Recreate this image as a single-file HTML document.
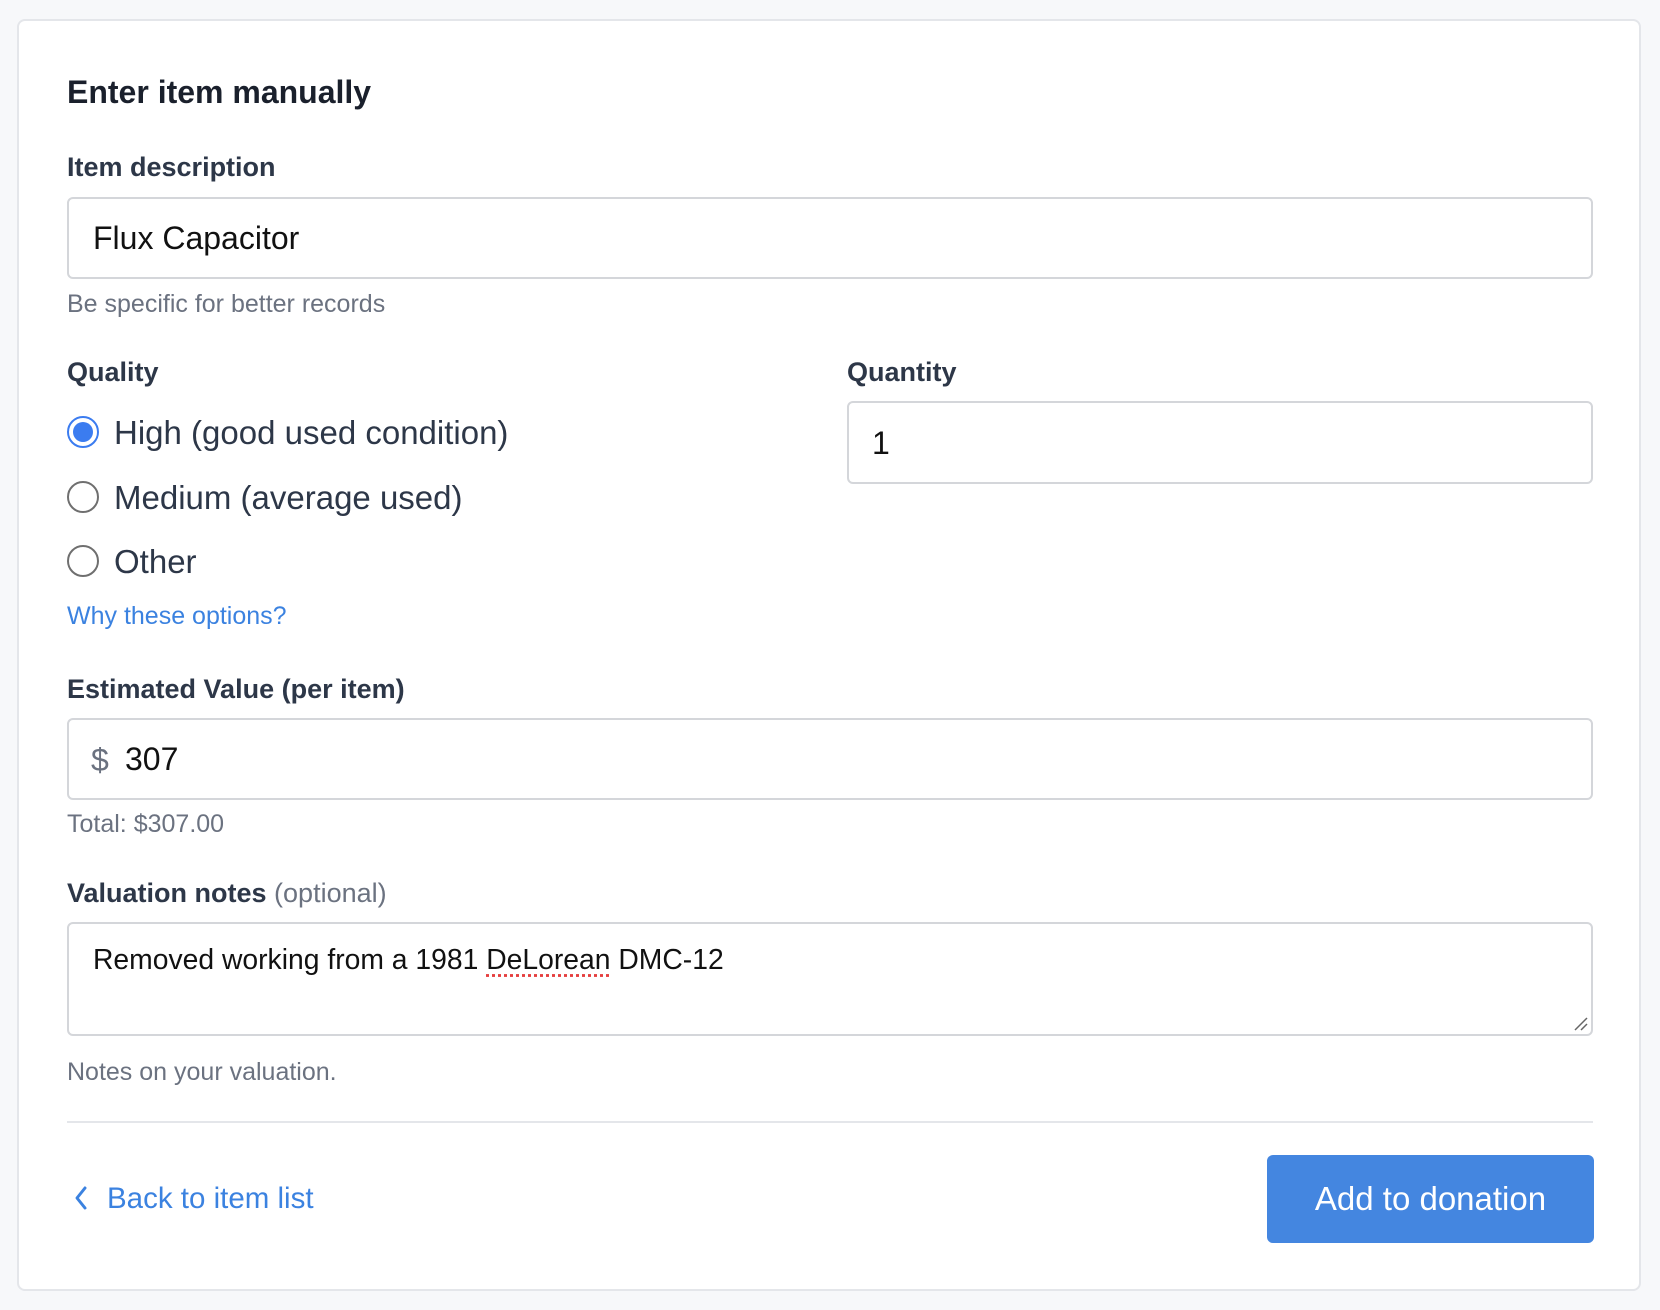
<!DOCTYPE html>
<html><head><meta charset="utf-8"><style>
body{margin:0;width:1660px;height:1310px;background:#f7f8fa;font-family:"Liberation Sans",sans-serif;position:relative;overflow:hidden}
.card{position:absolute;left:17px;top:19px;width:1624px;height:1272px;background:#fff;border:2px solid #e4e6ea;border-radius:8px;box-sizing:border-box}
.a{position:absolute;white-space:nowrap;line-height:1}
.lbl{font-size:27px;font-weight:bold;color:#2d3748}
.help{font-size:25px;color:#6b7280}
.inp{position:absolute;left:67px;width:1526px;border:2px solid #d4d6da;border-radius:6px;box-sizing:border-box;background:#fff}
.radio{position:absolute;left:67px;width:32px;height:32px;border-radius:50%;border:2px solid #6f6f6f;box-sizing:border-box}
.rt{font-size:33px;color:#2d3748}
</style></head><body>
<div class="card"></div>
<div class="a" style="left:67px;top:76px;font-size:32px;font-weight:bold;color:#1a202c">Enter item manually</div>
<div class="a lbl" style="left:67px;top:154px">Item description</div>
<div class="inp" style="top:197px;height:82px"></div>
<div class="a" style="left:93px;top:222px;font-size:32px;color:#111">Flux Capacitor</div>
<div class="a help" style="left:67px;top:292px">Be specific for better records</div>
<div class="a lbl" style="left:67px;top:359px">Quality</div>
<div class="a lbl" style="left:847px;top:359px">Quantity</div>
<div class="inp" style="left:847px;width:746px;top:401px;height:83px"></div>
<div class="a" style="left:872px;top:427px;font-size:32px;color:#111">1</div>
<div class="radio" style="top:416px;border-color:#3b7cf0;"><div style="position:absolute;left:4px;top:4px;width:20px;height:20px;border-radius:50%;background:#3b7cf0"></div></div>
<div class="a rt" style="left:114px;top:416px">High (good used condition)</div>
<div class="radio" style="top:481px"></div>
<div class="a rt" style="left:114px;top:481px">Medium (average used)</div>
<div class="radio" style="top:545px"></div>
<div class="a rt" style="left:114px;top:545px">Other</div>
<div class="a" style="left:67px;top:604px;font-size:25px;color:#3b82e0">Why these options?</div>
<div class="a lbl" style="left:67px;top:676px">Estimated Value (per item)</div>
<div class="inp" style="top:718px;height:82px"></div>
<div class="a" style="left:91px;top:744px;font-size:32px;color:#6b7280">$</div>
<div class="a" style="left:125px;top:743px;font-size:32px;color:#111">307</div>
<div class="a help" style="left:67px;top:812px">Total: $307.00</div>
<div class="a lbl" style="left:67px;top:880px">Valuation notes <span style="font-weight:normal;color:#6b7280">(optional)</span></div>
<div class="inp" style="top:922px;height:114px"></div>
<div class="a" style="left:93px;top:945px;font-size:28.3px;color:#111">Removed working from a 1981 <span style="text-decoration:underline dotted #e53e3e;text-underline-offset:5px">DeLorean</span> DMC-12</div>
<svg style="position:absolute;left:1573px;top:1016px" width="16" height="16"><path d="M2 14L14 2M8 14L14 8" stroke="#666" stroke-width="1.5"/></svg>
<div class="a help" style="left:67px;top:1060px">Notes on your valuation.</div>
<div style="position:absolute;left:67px;top:1121px;width:1526px;height:2px;background:#e4e6ea"></div>
<svg style="position:absolute;left:72px;top:1185px" width="18" height="26"><path d="M13 3L5 13L13 23" fill="none" stroke="#3b82e0" stroke-width="3" stroke-linecap="round" stroke-linejoin="round"/></svg>
<div class="a" style="left:107px;top:1184px;font-size:29.5px;color:#3b82e0">Back to item list</div>
<div style="position:absolute;left:1267px;top:1155px;width:327px;height:88px;background:#4486e0;border-radius:6px;color:#fff;font-size:33px;line-height:88px;text-align:center">Add to donation</div>
</body></html>
